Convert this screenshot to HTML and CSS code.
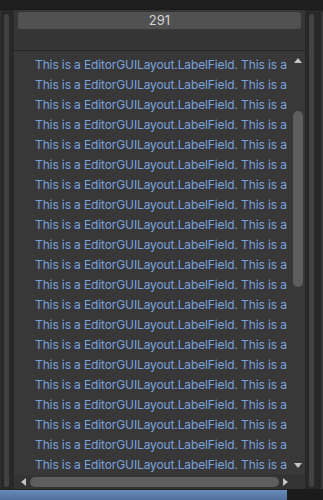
FILE: index.html
```html
<!DOCTYPE html>
<html lang="en">
    <head>
        <meta charset="UTF-8" />
        <meta name="viewport" content="width=device-width, initial-scale=1.0" />
        <title>LabelField Scroll</title>

        <link rel="stylesheet" href="styles.css">
    </head>

    <body>
        <div class="topbar"></div>

        <div class="janela">
            <div class="lado_esq">
                <div class="barra_fina"></div>
            </div>

            <div class="painel">
                <div class="cabecalho">
                    <div class="campo">291</div>
                </div>

                <div class="rolagem">
                    <div class="conteudo">
                        <div class="linhas" id="linhas"></div>
                        <div class="vscroll">
                            <span class="seta seta_cima"></span>
                            <div class="trilho">
                                <div class="polegar"></div>
                            </div>
                            <span class="seta seta_baixo"></span>
                        </div>
                    </div>

                    <div class="hscroll">
                        <span class="seta seta_esq"></span>
                        <div class="polegar_h"></div>
                        <span class="seta seta_dir"></span>
                    </div>
                </div>
            </div>

            <div class="lado_dir">
                <div class="barra_fina"></div>
            </div>

            <div class="resto"></div>
        </div>

        <div class="rodape">
            <div class="rodape_azul"></div>
            <div class="rodape_escuro"></div>
        </div>

        <script>
            (() => {
                const $linhas = document.querySelector("#linhas");
                for (let i = 0; i < 21; i++) {
                    const linha = document.createElement("div");
                    linha.className = "linha";
                    linha.textContent = "This is a EditorGUILayout.LabelField. This is a";
                    $linhas.appendChild(linha);
                }
            })();
        </script>
    </body>
</html>
```

FILE: styles.css
```css
body {
    margin: 0;
    width: 323px;
    height: 500px;
    overflow: hidden;
    background-color: #282828;
    font-family: Inter, "Noto Sans", sans-serif;
}

.topbar {
    height: 9px;
    background-color: #1f1f1f;
    border-bottom: 1px solid #1a1a1a;
}

.janela {
    display: flex;
    height: 479px;
}

.lado_esq {
    width: 14px;
    display: flex;
    justify-content: center;
    padding-top: 4px;
    box-sizing: border-box;
    border-left: 1px solid #303030;
}
.lado_esq .barra_fina {
    width: 5px;
    margin-left: -2px;
}

.barra_fina {
    background-color: #424242;
    border-radius: 3px;
    height: 473px;
}

.painel {
    width: 291px;
    display: flex;
    flex-direction: column;
    background-color: #383838;
}

.cabecalho {
    height: 42px;
    padding: 2px 4px 0 4px;
    box-sizing: border-box;
    background-color: #363636;
    border-bottom: 1px solid #232323;
}

.campo {
    height: 17px;
    background-color: #515151;
    border-radius: 3px;
    color: #d4d4d4;
    font-size: 13px;
    line-height: 17px;
    text-align: center;
}

.rolagem {
    flex: 1;
    display: flex;
    flex-direction: column;
}

.conteudo {
    flex: 1;
    display: flex;
    overflow: hidden;
}

.linhas {
    flex: 1;
    overflow: hidden;
    padding: 4px 0 0 21px;
}

.linha {
    height: 20px;
    line-height: 20px;
    font-size: 12px;
    letter-spacing: -0.12px;
    color: #7ba3df;
    white-space: nowrap;
}

.vscroll {
    width: 15px;
    display: flex;
    flex-direction: column;
    align-items: center;
    padding: 7px 0 7px 0;
    box-sizing: border-box;
}

.trilho {
    flex: 1;
    width: 10px;
    padding-top: 48px;
    box-sizing: border-box;
}

.polegar {
    height: 176px;
    background-color: #5e5e5e;
    border-radius: 5px;
}

.seta {
    width: 0;
    height: 0;
    border: 4px solid transparent;
}
.seta_cima {
    border-bottom: 5px solid #c4c4c4;
    border-top-width: 0;
}
.seta_baixo {
    border-top: 5px solid #c4c4c4;
    border-bottom-width: 0;
}
.seta_esq {
    border-right: 5px solid #c4c4c4;
    border-left-width: 0;
}
.seta_dir {
    border-left: 5px solid #c4c4c4;
    border-right-width: 0;
}

.hscroll {
    height: 14px;
    display: flex;
    align-items: center;
    gap: 4px;
    padding: 0 17px 0 7px;
    background-color: #333;
}

.polegar_h {
    flex: 1;
    height: 10px;
    background-color: #5e5e5e;
    border-radius: 5px;
}

.lado_dir {
    width: 13px;
    display: flex;
    justify-content: center;
    padding-top: 4px;
    box-sizing: border-box;
}
.lado_dir .barra_fina {
    width: 5px;
}

.resto {
    flex: 1;
    margin-top: 2px;
    border-left: 3px solid #262626;
    background-color: #393939;
}

.rodape {
    display: flex;
    height: 11px;
}

.rodape_azul {
    width: 287px;
    background-image: linear-gradient(#6a8bb8, #4f6f9e);
    border-top: 1px solid #222;
}

.rodape_escuro {
    flex: 1;
    background-color: #1c1c1c;
}
```
